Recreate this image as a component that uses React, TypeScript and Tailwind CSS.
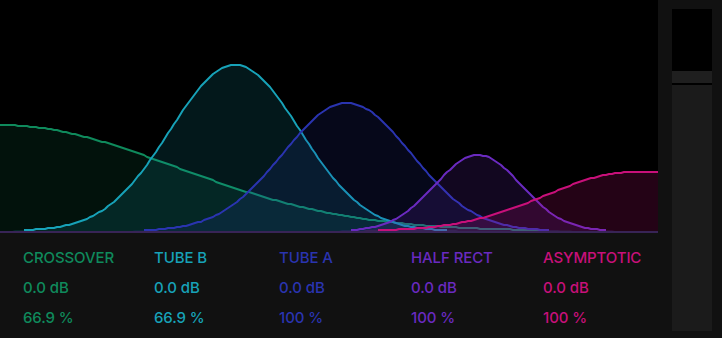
import React from "react";

const W = 658;
const H = 233;

type Curve = { color: string; fn: (x: number) => number; op: number };

const g = (x: number, c: number, s: number) => Math.exp(-((x - c) ** 2) / (2 * s * s));

const curves: Curve[] = [
  { color: "#0f8a5c", op: 0.13, fn: (x) => 106 * g(Math.max(x, 0), 0, 175) },
  { color: "#17a2b8", op: 0.15, fn: (x) => 166 * g(x, 235, 65) },
  { color: "#2a34b0", op: 0.15, fn: (x) => 128 * g(x, 347, 64) },
  { color: "#6a2ac0", op: 0.17, fn: (x) => 76 * g(x, 478, 43) },
  { color: "#c8107a", op: 0.18, fn: (x) => 59 * g(Math.min(x, 633), 633, 87) },
];

function buildPaths(fn: (x: number) => number) {
  const step = 3;
  const pts: string[] = [];
  let line = "";
  let drawing = false;
  for (let x = 0; x <= W + step; x += step) {
    const xx = Math.min(x, W);
    const v = fn(xx);
    const y = Math.round(H - 2 - v);
    pts.push(`${xx} ${y}`);
    if (v >= 0.8) {
      line += (drawing ? " L" : " M") + `${xx} ${y}`;
      drawing = true;
    } else {
      drawing = false;
    }
  }
  const fill = "M" + pts.join(" L") + ` V${H} H0 Z`;
  return { line: line.trim(), fill };
}

function Chart() {
  return (
    <svg width={W} height={H} className="block">
      <rect width={W} height={H} fill="#000" />
      {curves.map((c, i) => {
        const p = buildPaths(c.fn);
        return (
          <g key={i}>
            <path d={p.fill} fill={c.color} fillOpacity={c.op} />
            <path d={p.line} fill="none" stroke={c.color} strokeWidth={2} strokeLinejoin="round" />
          </g>
        );
      })}
    </svg>
  );
}

const cols = [
  { name: "CROSSOVER", pct: "66.9 %", cls: "text-[#0f8a5c]" },
  { name: "TUBE B", pct: "66.9 %", cls: "text-[#17a2b8]" },
  { name: "TUBE A", pct: "100 %", cls: "text-[#2a34b0]" },
  { name: "HALF RECT", pct: "100 %", cls: "text-[#6a2ac0]" },
  { name: "ASYMPTOTIC", pct: "100 %", cls: "text-[#c8107a]" },
];

export default function App() {
  return (
    <div className="flex w-[722px] h-[338px] bg-[#111111] overflow-hidden" style={{ fontFamily: "Inter, 'Noto Sans', sans-serif" }}>
      <div className="flex flex-col w-[658px]">
        <Chart />
        <div className="grid grid-cols-[131px_125px_132px_132px_1fr] pl-[23px] pt-[10px] text-[15px] font-medium leading-[30px] tracking-[-0.1px]">
          {cols.map((c) => (
            <div key={c.name} className={`flex flex-col ${c.cls}`}>
              <span>{c.name}</span>
              <span>0.0 dB</span>
              <span>{c.pct}</span>
            </div>
          ))}
        </div>
      </div>
      <div className="flex-1 pl-[14px] pr-[10px] pt-[9px] pb-[7px]">
        <div className="flex flex-col h-full bg-[#1b1b1b]">
          <div className="h-[62px] bg-black" />
          <div className="h-[12px] bg-[#1f1f1f]" />
          <div className="h-[2px] bg-black" />
        </div>
      </div>
    </div>
  );
}
